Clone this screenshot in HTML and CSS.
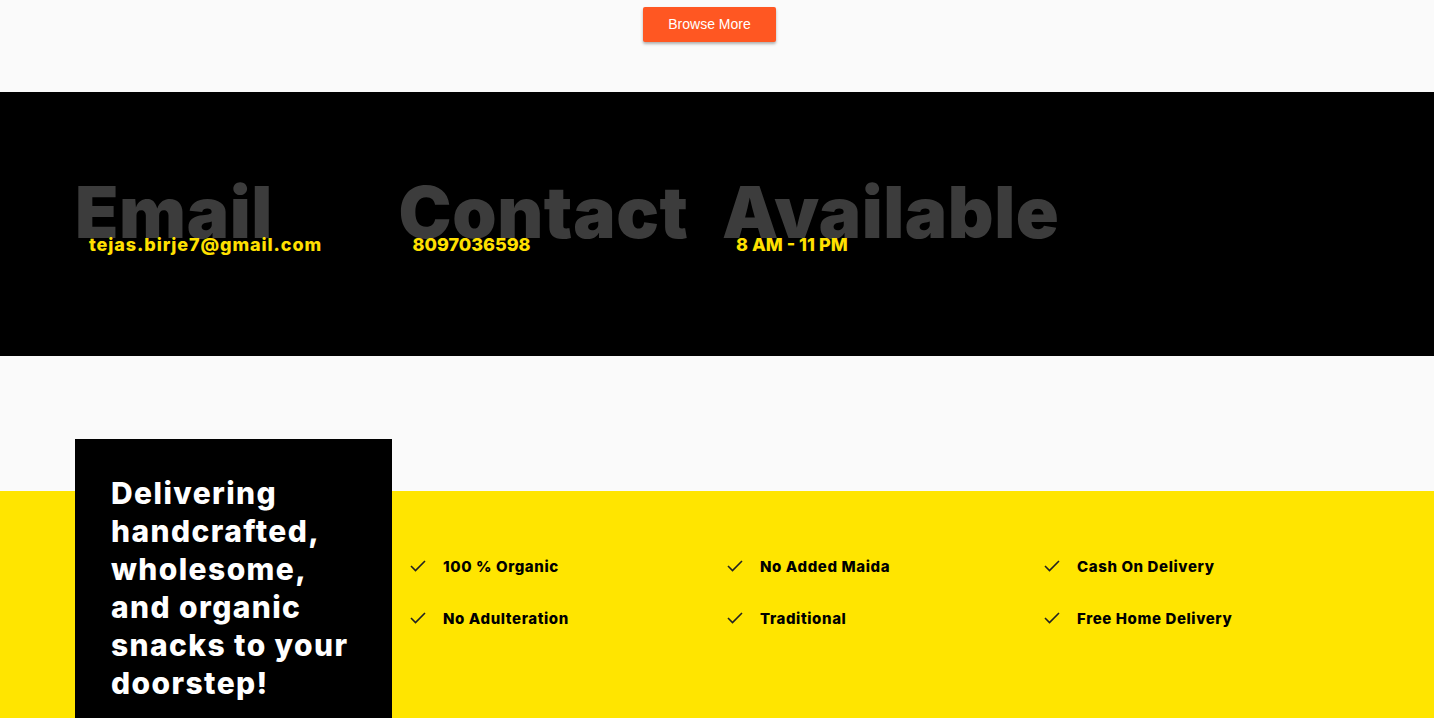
FILE: index.html
```html
<!DOCTYPE html>
<html lang="en">
<head>
<meta charset="utf-8">
<title>Snacks</title>
<link rel="stylesheet" href="styles.css">
</head>
<body>
<section class="browse">
  <button class="browse-btn">Browse More</button>
</section>

<section class="contact">
  <div class="contact-col">
    <h2 class="contact-title">Email</h2>
    <p class="contact-value contact-value--wide">tejas.birje7@gmail.com</p>
  </div>
  <div class="contact-col">
    <h2 class="contact-title">Contact</h2>
    <p class="contact-value">8097036598</p>
  </div>
  <div class="contact-col">
    <h2 class="contact-title">Available</h2>
    <p class="contact-value">8 AM - 11 PM</p>
  </div>
</section>

<div class="spacer"></div>

<section class="features">
  <div class="tagline">
    <p>Delivering handcrafted, wholesome, and organic snacks to your doorstep!</p>
  </div>
  <ul class="feature-list">
    <li><svg class="check" viewBox="0 0 16 12"><polyline points="1,6 5.5,10.5 15,1"/></svg><span>100 % Organic</span></li>
    <li><svg class="check" viewBox="0 0 16 12"><polyline points="1,6 5.5,10.5 15,1"/></svg><span>No Added Maida</span></li>
    <li><svg class="check" viewBox="0 0 16 12"><polyline points="1,6 5.5,10.5 15,1"/></svg><span>Cash On Delivery</span></li>
    <li><svg class="check" viewBox="0 0 16 12"><polyline points="1,6 5.5,10.5 15,1"/></svg><span>No Adulteration</span></li>
    <li><svg class="check" viewBox="0 0 16 12"><polyline points="1,6 5.5,10.5 15,1"/></svg><span>Traditional</span></li>
    <li><svg class="check" viewBox="0 0 16 12"><polyline points="1,6 5.5,10.5 15,1"/></svg><span>Free Home Delivery</span></li>
  </ul>
</section>
</body>
</html>
```

FILE: styles.css
```css
* { box-sizing: border-box; }
html, body { margin: 0; padding: 0; }
body {
  background: #fafafa;
  font-family: Inter, "Noto Sans", sans-serif;
  overflow: hidden;
}

.browse {
  height: 92px;
  display: flex;
  justify-content: center;
  padding: 7px 15px 0 0;
}
.browse-btn {
  width: 133px;
  height: 35px;
  border: none;
  border-radius: 2px;
  background: #ff5722;
  color: #fff;
  font-family: "Liberation Sans", Arial, sans-serif;
  font-size: 14px;
  box-shadow: 0 2px 3px rgba(0,0,0,0.3);
  padding: 0 0 1px;
}

.contact {
  background: #000;
  height: 264px;
  display: grid;
  grid-template-columns: repeat(3, 323.5px);
  padding: 80px 0 0 75px;
}
.contact-title {
  margin: 0;
  font-family: Inter, sans-serif;
  font-weight: 900;
  font-size: 71px;
  line-height: 80px;
  color: #3c3c3c;
  letter-spacing: 0.6px;
  white-space: nowrap;
}
.contact-value {
  margin: -18px 0 0 14px;
  font-family: Inter, sans-serif;
  font-weight: 800;
  font-size: 18px;
  line-height: 22px;
  color: #ffe000;
  position: relative;
}
.contact-value--wide { letter-spacing: 0.9px; }

.spacer { height: 135px; }

.features {
  background: #ffe500;
  display: flex;
  align-items: flex-start;
  height: 300px;
}
.tagline {
  width: 317px;
  margin: -52px 0 0 75px;
  background: #000;
  padding: 35px 25px 60px 36px;
}
.tagline p {
  margin: 0;
  color: #fff;
  font-family: Inter, sans-serif;
  font-weight: 800;
  font-size: 30px;
  line-height: 38px;
  letter-spacing: 1.4px;
}

.feature-list {
  list-style: none;
  margin: 0;
  padding: 64px 0 0 18px;
  display: grid;
  grid-template-columns: repeat(3, 317px);
  row-gap: 30px;
}
.feature-list li {
  display: flex;
  align-items: center;
  height: 22px;
  gap: 17px;
}
.check {
  width: 16px;
  height: 12px;
  fill: none;
  stroke: #222;
  stroke-width: 1.6;
}
.feature-list span {
  font-family: Inter, sans-serif;
  font-weight: 800;
  font-size: 15px;
  letter-spacing: 0.6px;
  color: #000;
}
```
